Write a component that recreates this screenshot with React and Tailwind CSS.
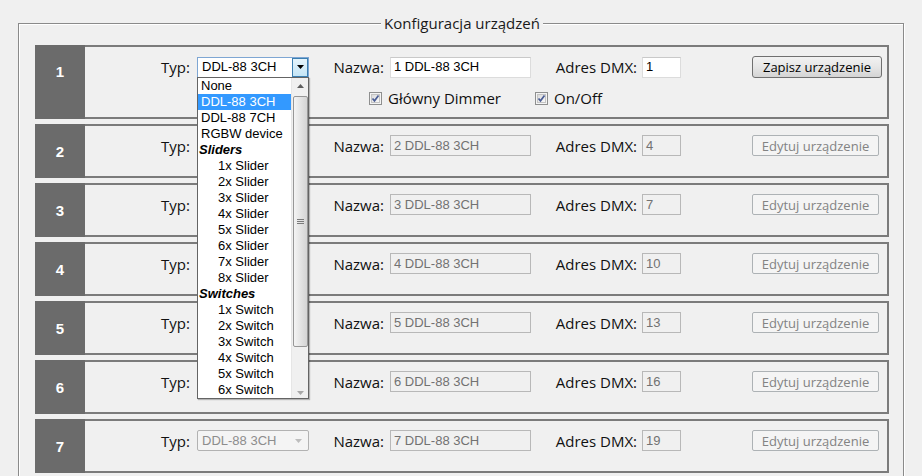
import React from 'react';

const OPTIONS = [
    { label: 'None' },
    { label: 'DDL-88 3CH', selected: true },
    { label: 'DDL-88 7CH' },
    { label: 'RGBW device' },
    { label: 'Sliders', group: true },
    { label: '1x Slider', indent: true },
    { label: '2x Slider', indent: true },
    { label: '3x Slider', indent: true },
    { label: '4x Slider', indent: true },
    { label: '5x Slider', indent: true },
    { label: '6x Slider', indent: true },
    { label: '7x Slider', indent: true },
    { label: '8x Slider', indent: true },
    { label: 'Switches', group: true },
    { label: '1x Switch', indent: true },
    { label: '2x Switch', indent: true },
    { label: '3x Switch', indent: true },
    { label: '4x Switch', indent: true },
    { label: '5x Switch', indent: true },
    { label: '6x Switch', indent: true },
];

const DEVICES = [2, 3, 4, 5, 6, 7].map((n) => ({ id: n, name: n + ' DDL-88 3CH', dmx: 1 + (n - 1) * 3 }));

function Checkbox({ label, width }) {
    return (
        <div className={'flex items-center ' + width}>
            <svg width="13" height="13" viewBox="0 0 13 13" className="mr-[6px]">
                <defs>
                    <linearGradient id="cbg" x1="0" y1="0" x2="1" y2="1">
                        <stop offset="0" stopColor="#d8d8d8" />
                        <stop offset="1" stopColor="#fbfbfb" />
                    </linearGradient>
                </defs>
                <rect x="0.5" y="0.5" width="12" height="12" fill="#f4f4f4" stroke="#8e8f8f" />
                <rect x="2.5" y="2.5" width="8" height="8" fill="url(#cbg)" stroke="#c4c4c4" />
                <path d="M3.5 6.5 L5.5 8.8 L9.5 3.6" fill="none" stroke="#4a5d95" strokeWidth="1.7" />
            </svg>
            <span>{label}</span>
        </div>
    );
}

function Dropdown() {
    return (
        <div className="absolute left-0 top-[20px] z-20 flex w-[112px] h-[322px] border border-[#646464] bg-white font-['Liberation_Sans',Arial,sans-serif] text-[13px] leading-[16px] text-black shadow-[1px_1px_1px_rgba(0,0,0,0.25)]">
            <div className="flex-1 overflow-hidden">
                {OPTIONS.map((o) => (
                    <div
                        key={o.label}
                        className={
                            'h-[16px] whitespace-nowrap ' +
                            (o.selected ? 'bg-[#3399ff] text-white ' : '') +
                            (o.group ? 'pl-[1px] font-bold italic ' : o.indent ? 'pl-[20px] ' : 'pl-[3px] ')
                        }
                    >
                        {o.label}
                    </div>
                ))}
            </div>
            <div className="relative w-[17px] bg-[#f0f0f0] border-l border-[#e6e6e6]">
                <div className="h-[17px] flex items-center justify-center">
                    <svg width="7" height="4" viewBox="0 0 7 4"><path d="M0 4 L3.5 0 L7 4 Z" fill="#5e5e5e" /></svg>
                </div>
                <div className="mx-auto mt-[1px] w-[15px] h-[251px] rounded-[2px] border border-[#979797] bg-gradient-to-r from-[#f4f4f4] to-[#d4d4d4] flex items-center justify-center">
                    <div className="flex flex-col gap-[1px]">
                        <div className="w-[7px] h-px bg-[#7a7a7a]" />
                        <div className="w-[7px] h-px bg-[#7a7a7a]" />
                        <div className="w-[7px] h-px bg-[#7a7a7a]" />
                    </div>
                </div>
                <div className="absolute bottom-[3px] left-0 w-full flex justify-center">
                    <svg width="7" height="4" viewBox="0 0 7 4"><path d="M0 0 L3.5 4 L7 0 Z" fill="#a8a8a8" /></svg>
                </div>
            </div>
        </div>
    );
}

function Select({ open, disabled, covered }) {
    return (
        <div className={'relative w-[112px] h-[21px]' + (covered ? ' invisible' : '')}>
            {disabled ? (
                <div className="flex h-full items-center border border-[#b2b2b2] rounded-[2px] bg-[#f4f4f4] pl-[4px] font-['Liberation_Sans',Arial,sans-serif] text-[13px] text-[#8d8d8d]">
                    <span className="flex-1">DDL-88 3CH</span>
                    <svg width="7" height="4" viewBox="0 0 7 4" className="mr-[6px]"><path d="M0 0 L3.5 4 L7 0 Z" fill="#bdbdbd" /></svg>
                </div>
            ) : (
                <div className="flex h-full items-center border border-[#7ea6d3] bg-white pl-[4px] font-['Liberation_Sans',Arial,sans-serif] text-[13px] text-black">
                    <span className="flex-1">DDL-88 3CH</span>
                    <div className="flex h-[19px] w-[16px] items-center justify-center border border-[#3c7fb1] bg-gradient-to-b from-[#e5f4fc] to-[#c4e5f6]">
                        <svg width="7" height="4" viewBox="0 0 7 4"><path d="M0 0 L3.5 4 L7 0 Z" fill="#000" /></svg>
                    </div>
                </div>
            )}
            {open ? <Dropdown /> : null}
        </div>
    );
}

function Field({ value, width, disabled }) {
    return (
        <div
            className={
                'flex h-[21px] items-center pl-[3px] font-[\'Liberation_Sans\',Arial,sans-serif] text-[13px] ' +
                width +
                (disabled
                    ? ' border border-[#b8b8b8] bg-[#f0f0f0] text-[#727272]'
                    : ' border border-[#dcdcdc] border-t-[#c9c9c9] bg-white text-black')
            }
        >
            {value}
        </div>
    );
}

function Row({ id, name, dmx, first }) {
    return (
        <div className={'flex ' + (first ? 'h-[74px]' : 'h-[54px]')}>
            <div
                className={
                    'w-[50px] bg-[#6b6b6b] flex justify-center font-[\'Liberation_Sans\',Arial,sans-serif] text-[15px] font-bold text-white leading-[20px] ' +
                    (first ? 'pt-[17px]' : 'items-center pt-[2px]')
                }
            >
                {id}
            </div>
            <div className="flex-1 border-2 border-l-0 border-[#7b7b7b] pt-[9px]">
                <div className="flex items-center">
                    <div className="w-[112px] pr-[7px] text-right">Typ:</div>
                    <Select open={first} disabled={!first} covered={!first && id < 7} />
                    <div className="w-[81px] pr-[6px] text-right">Nazwa:</div>
                    <Field value={name} width="w-[141px]" disabled={!first} />
                    <div className="w-[111px] pr-[5px] text-right">Adres DMX:</div>
                    <Field value={dmx} width="w-[39px]" disabled={!first} />
                    <div className="w-[71px]" />
                    {first ? (
                        <button className="w-[130px] h-[22px] rounded-[3px] border border-[#707070] bg-gradient-to-b from-[#f2f2f2] via-[#e6e6e6] to-[#d4d4d4] text-[13px] leading-[18px] text-black">
                            Zapisz urządzenie
                        </button>
                    ) : (
                        <button className="w-[127px] h-[21px] rounded-[2px] border border-[#adb2b5] bg-[#f4f4f4] text-[13px] leading-[18px] text-[#838383]">
                            Edytuj urządzenie
                        </button>
                    )}
                </div>
                {first ? (
                    <div className="mt-[10px] flex h-[20px] items-center pl-[284px]">
                        <Checkbox label="Główny Dimmer" width="w-[166px]" />
                        <Checkbox label="On/Off" width="" />
                    </div>
                ) : null}
            </div>
        </div>
    );
}

export default function App() {
    return (
        <div className="min-h-[476px] bg-[#f0f0f0] pt-[13px] font-['Open_Sans',sans-serif] text-[15px] leading-[20px] text-[#111]">
            <fieldset className="ml-[18px] w-[886px] border border-[#8a8a8a] pl-[16px] pr-[14px] pt-[12px] pb-[20px] shadow-[inset_1px_1px_0_#fff,1px_1px_0_#fff]">
                <legend className="mx-auto bg-[#f0f0f0] px-[3px] text-[#1a1a1a]">Konfiguracja urządzeń</legend>
                <div className="flex flex-col gap-[5px]">
                    <div className="relative z-10">
                        <Row id={1} name="1 DDL-88 3CH" dmx="1" first />
                    </div>
                    {DEVICES.map((d) => (
                        <Row key={d.id} id={d.id} name={d.name} dmx={d.dmx} />
                    ))}
                </div>
            </fieldset>
        </div>
    );
}
